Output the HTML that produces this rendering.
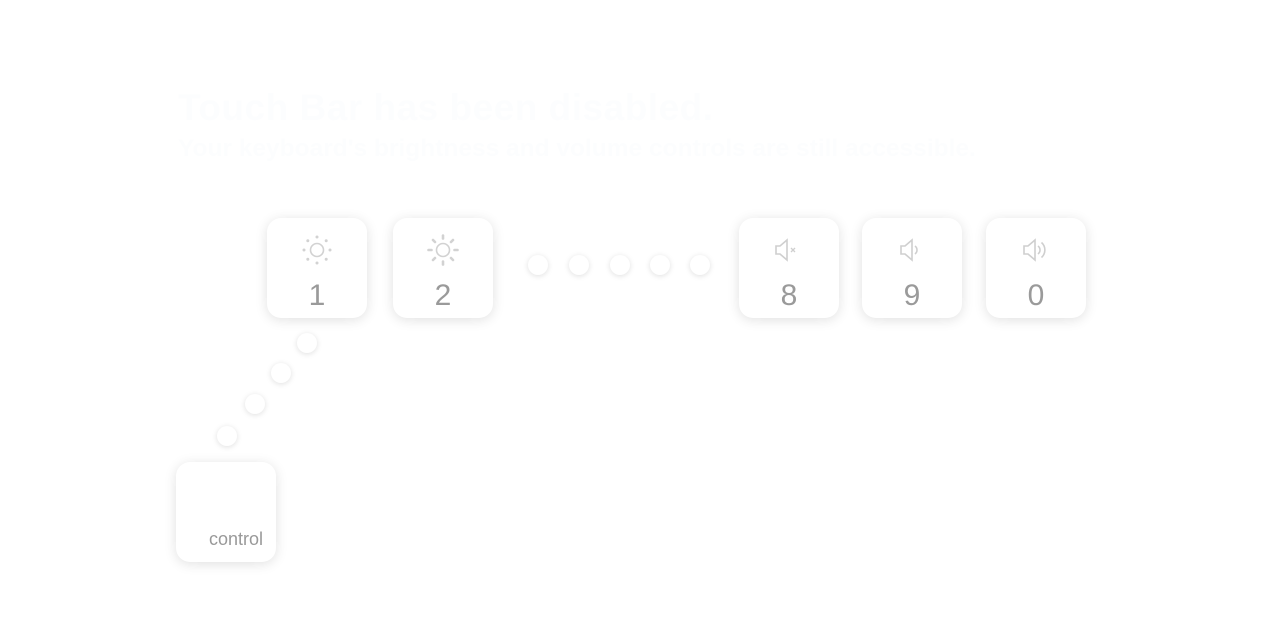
<!DOCTYPE html>
<html><head><style>
body{margin:0;width:1262px;height:642px;background:#fff;position:relative;overflow:hidden;font-family:"Liberation Sans",sans-serif}
.t1{position:absolute;left:178px;top:87px;font-size:37px;font-weight:bold;color:#fcfdfe;white-space:nowrap;letter-spacing:0.5px}
.t2{position:absolute;left:178px;top:135px;font-size:24.5px;font-weight:bold;color:#fcfdfe;white-space:nowrap}
.k{position:absolute;width:100px;height:100px;border-radius:14px;background:#fff;box-shadow:0 2px 12px rgba(0,0,0,0.12)}
.k .n{position:absolute;left:0;right:0;top:62px;text-align:center;font-size:30px;color:#9a9a9a;line-height:32px}
.k svg{position:absolute;left:32px;top:14px}
.d{position:absolute;width:20px;height:20px;border-radius:50%;background:#fff;box-shadow:0 1px 6px rgba(0,0,0,0.13)}
</style></head><body>
<div class="t1">Touch Bar has been disabled.</div>
<div class="t2">Your keyboard's brightness and volume controls are still accessible.</div>

<div class="k" style="left:267px;top:218px"><svg width="36" height="36" viewBox="0 0 36 36" fill="none" stroke="#d2d2d2" stroke-width="1.6"><circle cx="18" cy="18" r="6.5"/><g fill="#d2d2d2" stroke="none"><circle cx="18" cy="5" r="1.5"/><circle cx="18" cy="31" r="1.5"/><circle cx="5" cy="18" r="1.5"/><circle cx="31" cy="18" r="1.5"/><circle cx="8.8" cy="8.8" r="1.5"/><circle cx="27.2" cy="8.8" r="1.5"/><circle cx="8.8" cy="27.2" r="1.5"/><circle cx="27.2" cy="27.2" r="1.5"/></g></svg><div class="n">1</div></div>
<div class="k" style="left:393px;top:218px"><svg width="36" height="36" viewBox="0 0 36 36" fill="none" stroke="#d2d2d2" stroke-width="1.6"><circle cx="18" cy="18" r="6.5"/><g stroke-width="2.6" stroke-linecap="round"><path d="M18 3.5v3M18 29.5v3M3.5 18h3M29.5 18h3M8 8l2 2M26 26l2 2M28 8l-2 2M8 28l2-2"/></g></svg><div class="n">2</div></div>

<div class="k" style="left:739px;top:218px"><svg width="36" height="36" viewBox="0 0 36 36" fill="none" stroke="#cfcfcf" stroke-width="1.6"><path d="M5 14h4l7-6v20l-7-6H5z"/><path d="M20 16l4 4M24 16l-4 4" stroke-width="1.3"/></svg><div class="n">8</div></div>
<div class="k" style="left:862px;top:218px"><svg width="36" height="36" viewBox="0 0 36 36" fill="none" stroke="#cfcfcf" stroke-width="1.6"><path d="M7 14h4l7-6v20l-7-6H7z"/><path d="M21 14a5 5 0 0 1 0 8"/></svg><div class="n">9</div></div>
<div class="k" style="left:986px;top:218px"><svg width="36" height="36" viewBox="0 0 36 36" fill="none" stroke="#cfcfcf" stroke-width="1.6"><path d="M6 14h4l7-6v20l-7-6H6z"/><path d="M20 14a5 5 0 0 1 0 8M23.5 10.5a10 10 0 0 1 0 15"/></svg><div class="n">0</div></div>

<div class="k" style="left:176px;top:462px"><div style="position:absolute;right:13px;bottom:12px;font-size:18px;color:#999">control</div></div>

<div class="d" style="left:528px;top:255px"></div>
<div class="d" style="left:569px;top:255px"></div>
<div class="d" style="left:610px;top:255px"></div>
<div class="d" style="left:650px;top:255px"></div>
<div class="d" style="left:690px;top:255px"></div>
<div class="d" style="left:297px;top:333px"></div>
<div class="d" style="left:271px;top:363px"></div>
<div class="d" style="left:245px;top:394px"></div>
<div class="d" style="left:217px;top:426px"></div>
</body></html>
